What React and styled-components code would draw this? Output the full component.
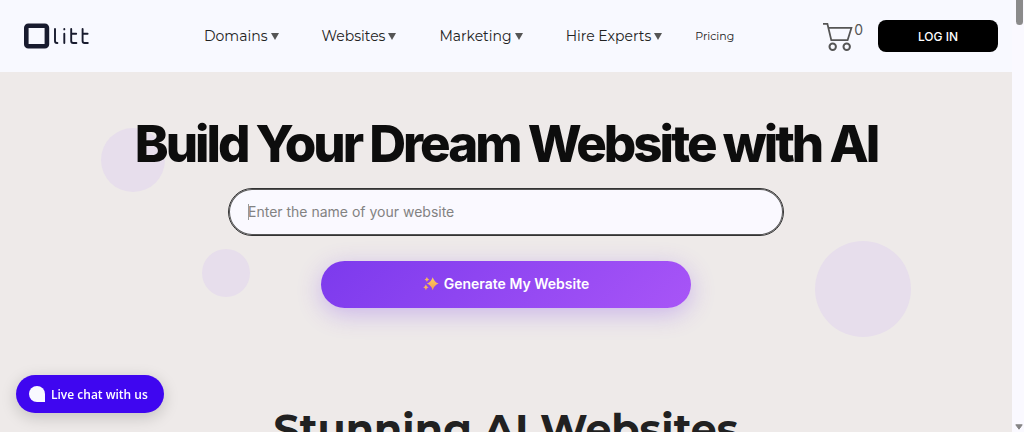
import React from 'react'
import styled, { createGlobalStyle } from 'styled-components'

const menuItems = ['Domains', 'Websites', 'Marketing', 'Hire Experts']

const circles = [
  { size: 64, top: 56, left: '10%' },
  { size: 48, top: 177, left: '20%' },
  { size: 96, top: 169, right: '10%' },
]

const Logo = () => (
  <svg width="66" height="26" viewBox="0 0 66 26" fill="none" stroke="#181b2e">
    <rect x="2.3" y="2.7" width="20.6" height="20.6" rx="2" strokeWidth="4.6" />
    <g strokeWidth="1.9" strokeLinecap="round" strokeLinejoin="round">
      <path d="M31 6v12q0 2 2 2h.4" />
      <path d="M40.3 10.7v9.3M40.3 6v.4" />
      <path d="M47.2 6v12q0 2 2 2h3.2M47.2 10.7h5" />
      <path d="M58.6 6v12q0 2 2 2h3.2M58.6 10.7h5" />
    </g>
  </svg>
)

const Cart = () => (
  <svg width="31" height="30" viewBox="0 0 31 30" fill="none" stroke="#555" strokeWidth="1.8">
    <path d="M0 2.8h4.4L8.3 19.2h16.3l3.8-12.3H5.4" />
    <circle cx="9.7" cy="25.8" r="3.2" strokeWidth="2" />
    <circle cx="23.7" cy="25.8" r="3.2" strokeWidth="2" />
  </svg>
)

const Sparkles = () => (
  <svg width="16" height="16" viewBox="0 0 16 16">
    <defs>
      <linearGradient id="spark" x1="0" y1="0" x2="0" y2="1">
        <stop offset="0" stopColor="#ffd35c" />
        <stop offset="1" stopColor="#f59a55" />
      </linearGradient>
    </defs>
    <g fill="url(#spark)">
      <path d="M9.7 1.2Q11.2 6.1 15.6 7.6Q11.2 9.1 9.7 14.2Q8.2 9.1 3.8 7.6Q8.2 6.1 9.7 1.2Z" />
      <path d="M3.9 1Q4.4 3 6.2 3.5Q4.4 4 3.9 6Q3.4 4 1.6 3.5Q3.4 3 3.9 1Z" />
      <path d="M2.9 8.4Q3.5 10.8 5.6 11.3Q3.5 11.9 2.9 14.2Q2.3 11.9 .2 11.3Q2.3 10.8 2.9 8.4Z" />
    </g>
  </svg>
)

const App = () => {
  return (
    <Viewport>
      <GlobalStyle />
      <Page>
        <Header>
          <LogoLink href="#" aria-label="Olitt">
            <Logo />
          </LogoLink>
          <Nav>
            {menuItems.map(label => (
              <NavLink key={label} href="#">
                {label}
                <Arrow />
              </NavLink>
            ))}
            <NavLink href="#" $small>
              Pricing
            </NavLink>
          </Nav>
          <Actions>
            <CartLink href="#" aria-label="Cart">
              <Cart />
              <span>0</span>
            </CartLink>
            <LoginButton type="button">LOG IN</LoginButton>
          </Actions>
        </Header>
        <Hero>
          {circles.map(({ size, top, left, right }) => (
            <Circle key={size} $size={size} $top={top} $left={left} $right={right} />
          ))}
          <Title>Build Your Dream Website with AI</Title>
          <Form onSubmit={e => e.preventDefault()}>
            <Field>
              <SiteName
                type="text"
                aria-label="Website name"
                placeholder="Enter the name of your website"
              />
              <Caret />
            </Field>
            <GenerateButton type="submit">
              <Sparkles />
              Generate My Website
            </GenerateButton>
          </Form>
        </Hero>
        <Showcase>
          <ShowcaseTitle>Stunning AI Websites</ShowcaseTitle>
        </Showcase>
      </Page>
      <Scrollbar>
        <Thumb />
        <ScrollArrow viewBox="0 0 8 6">
          <path d="M.8.8h6.4L4 5.2z" fill="#858585" stroke="#858585" strokeLinejoin="round" />
        </ScrollArrow>
      </Scrollbar>
      <ChatButton type="button">
        <ChatIcon />
        Live chat with us
      </ChatButton>
    </Viewport>
  )
}

export default App

const GlobalStyle = createGlobalStyle`
  * {
    box-sizing: border-box;
  }
  body {
    margin: 0;
    background-color: #eeeae9;
    font-family: Inter, sans-serif;
  }
`

const Viewport = styled.div`
  display: flex;
  height: 100vh;
  overflow: hidden;
`

const Page = styled.div`
  flex: 1;
  min-width: 0;
  overflow: hidden;
`

const Header = styled.header`
  display: flex;
  align-items: center;
  height: 72px;
  padding: 0 14px 0 24px;
  background-color: #f8f9ff;
`

const LogoLink = styled.a`
  display: flex;
`

const Nav = styled.nav`
  display: flex;
  align-items: center;
  margin-left: 93px;
`

const NavLink = styled.a`
  display: flex;
  align-items: center;
  gap: 3px;
  padding: 0 ${props => (props.$small ? '11px' : '21px')};
  font-family: Montserrat, Inter, sans-serif;
  font-size: ${props => (props.$small ? '11px' : '14px')};
  line-height: 20px;
  white-space: nowrap;
  color: #222;
  text-decoration: none;
`

const Arrow = styled.span`
  margin-right: 1px;
  border: 4px solid transparent;
  border-top: 7px solid #555;
  border-bottom: 0;
`

const Actions = styled.div`
  display: flex;
  align-items: center;
  gap: 15px;
  margin-left: auto;
`

const CartLink = styled.a`
  display: flex;
  font-size: 14px;
  line-height: 18px;
  color: #555;
  text-decoration: none;
`

const LoginButton = styled.button`
  width: 120px;
  height: 32px;
  border: 0;
  border-radius: 8px;
  background-color: #000;
  font-family: inherit;
  font-size: 12px;
  font-weight: 500;
  color: white;
`

const Hero = styled.section`
  position: relative;
  padding: 40px 24px 93px;
`

const Circle = styled.div`
  position: absolute;
  top: ${props => props.$top}px;
  left: ${props => props.$left || 'auto'};
  right: ${props => props.$right || 'auto'};
  width: ${props => props.$size}px;
  height: ${props => props.$size}px;
  border-radius: 50%;
  background-color: #e7deec;
`

const Title = styled.h1`
  position: relative;
  margin: 0;
  font-size: 51px;
  font-weight: 800;
  line-height: 64px;
  letter-spacing: -3px;
  text-align: center;
  white-space: nowrap;
  color: #0d0d0d;
`

const Form = styled.form`
  position: relative;
  display: flex;
  flex-direction: column;
  align-items: center;
  gap: 25px;
  margin-top: 12px;
`

const Field = styled.div`
  position: relative;
  width: 100%;
  max-width: 556px;
`

const SiteName = styled.input`
  display: block;
  width: 100%;
  height: 48px;
  padding: 0 19px 2px;
  border: 1px solid #333;
  border-radius: 24px;
  outline: 0;
  background-color: #faf9ff;
  box-shadow: inset 0 0 0 1px #555;
  font-family: inherit;
  font-size: 14px;
  color: #222;
  &::placeholder {
    color: #828282;
    opacity: 1;
  }
`

const Caret = styled.span`
  position: absolute;
  top: 16px;
  left: 20px;
  width: 1px;
  height: 16px;
  background-color: #999;
`

const GenerateButton = styled.button`
  display: flex;
  align-items: center;
  justify-content: center;
  gap: 5px;
  width: 100%;
  max-width: 370px;
  height: 47px;
  padding: 0 0 2px;
  border: 0;
  border-radius: 24px;
  background: linear-gradient(135deg, #7c3aed, #a855f7);
  box-shadow: 0 6px 24px rgba(124, 58, 237, 0.3);
  font-family: inherit;
  font-size: 14px;
  font-weight: 600;
  color: white;
`

const Showcase = styled.section`
  padding: 0 24px;
`

const ShowcaseTitle = styled.h2`
  margin: 0;
  font-family: Montserrat, Inter, sans-serif;
  font-size: 41px;
  font-weight: 700;
  line-height: 56px;
  text-align: center;
  white-space: nowrap;
  color: #212121;
`

const Scrollbar = styled.div`
  display: flex;
  flex-direction: column;
  align-items: center;
  justify-content: space-between;
  width: 12px;
  padding: 0 0 2px 2px;
  background-color: #faf9ff;
`

const Thumb = styled.div`
  width: 7px;
  height: 25px;
  border-radius: 0 0 4px 4px;
  background-color: #8b8b8b;
`

const ScrollArrow = styled.svg`
  width: 8px;
  height: 6px;
`

const ChatButton = styled.button`
  position: fixed;
  bottom: 19px;
  left: 16px;
  display: flex;
  align-items: center;
  gap: 6px;
  height: 38px;
  padding: 0 16px 0 13px;
  border: 0;
  border-radius: 19px;
  background-color: #3f06f0;
  box-shadow: 0 4px 16px rgba(0, 0, 0, 0.18);
  font-family: 'Open Sans', sans-serif;
  font-size: 12px;
  font-weight: 600;
  color: white;
`

const ChatIcon = styled.span`
  width: 16px;
  height: 16px;
  border-radius: 8px 8px 0 8px;
  background-color: #f8f9ff;
`
